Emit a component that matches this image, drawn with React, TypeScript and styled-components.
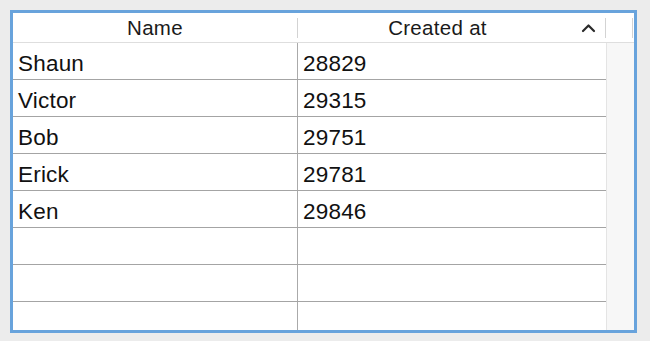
import styled, { createGlobalStyle } from "styled-components";

const GlobalStyle = createGlobalStyle`
  html, body {
    margin: 0;
    padding: 0;
    background: #ececec;
  }
  body {
    font-family: "Liberation Sans", Arial, sans-serif;
    color: #111;
  }
`;

const Window = styled.div`
  width: 650px;
  height: 341px;
  box-sizing: border-box;
  padding: 10px 13px 8px 10px;
`;

const Frame = styled.div`
  box-sizing: border-box;
  width: 627px;
  height: 323px;
  border: 3px solid #68a3dc;
  background: #fff;
  display: flex;
  flex-direction: column;
  overflow: hidden;
`;

const Header = styled.div`
  display: flex;
  align-items: center;
  height: 29px;
  flex-shrink: 0;
  border-bottom: 1px solid #dedede;
  background: #fff;
`;

const HeaderCell = styled.div<{ $width: number }>`
  width: ${(p) => p.$width}px;
  flex-shrink: 0;
  display: flex;
  align-items: center;
  height: 100%;
  padding-top: 1px;
  box-sizing: border-box;
  font-size: 20.5px;
  letter-spacing: 0.3px;
  color: #1a1a1a;
`;

const HeaderLabel = styled.span`
  flex: 1;
  text-align: center;
`;

const SortIcon = styled.svg`
  width: 15px;
  height: 10px;
  margin-right: 9px;
  margin-left: 4px;
`;

const Divider = styled.div`
  width: 1px;
  height: 20px;
  background: #d3d3d3;
  flex-shrink: 0;
`;

const Body = styled.div`
  flex: 1;
  display: flex;
  min-height: 0;
`;

const Rows = styled.div`
  width: 593px;
  flex-shrink: 0;
  display: flex;
  flex-direction: column;
  overflow: hidden;
`;

const Row = styled.div`
  display: flex;
  height: 36px;
  flex-shrink: 0;
  border-bottom: 1.5px solid #a4a4a4;
`;

const Cell = styled.div<{ $width: number; $last?: boolean }>`
  width: ${(p) => p.$width}px;
  flex-shrink: 0;
  box-sizing: border-box;
  display: flex;
  align-items: center;
  padding: 5px 0 0 5px;
  font-size: 22.5px;
  letter-spacing: 0.2px;
  border-right: ${(p) => (p.$last ? "none" : "1.5px solid #aaaaaa")};
`;

const ScrollTrack = styled.div`
  flex: 1;
  background: #f7f7f7;
  border-left: 1px solid #e4e4e4;
`;

const people = [
  { name: "Shaun", created: "28829" },
  { name: "Victor", created: "29315" },
  { name: "Bob", created: "29751" },
  { name: "Erick", created: "29781" },
  { name: "Ken", created: "29846" },
  { name: "", created: "" },
  { name: "", created: "" },
  { name: "", created: "" },
];

const App = () => {
  return (
    <>
      <GlobalStyle />
      <Window>
        <Frame>
          <Header>
            <HeaderCell $width={284}>
              <HeaderLabel>Name</HeaderLabel>
            </HeaderCell>
            <Divider />
            <HeaderCell $width={307}>
              <HeaderLabel>Created at</HeaderLabel>
              <SortIcon viewBox="0 0 15 10">
                <polyline
                  points="2,8 7.5,2.5 13,8"
                  fill="none"
                  stroke="#2a2a2a"
                  strokeWidth="2.2"
                  strokeLinecap="round"
                  strokeLinejoin="round"
                />
              </SortIcon>
            </HeaderCell>
            <Divider />
            <HeaderCell $width={26} />
            <Divider />
          </Header>
          <Body>
            <Rows>
              {people.map((p, i) => (
                <Row key={i}>
                  <Cell $width={285}>{p.name}</Cell>
                  <Cell $width={308} $last>
                    {p.created}
                  </Cell>
                </Row>
              ))}
            </Rows>
            <ScrollTrack />
          </Body>
        </Frame>
      </Window>
    </>
  );
};

export default App;
